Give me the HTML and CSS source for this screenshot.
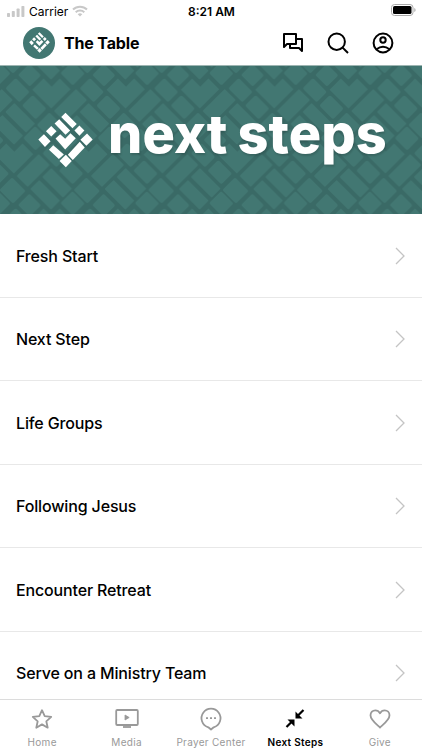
FILE: index.html
```html
<!DOCTYPE html>
<html lang="en">
<head>
  <meta charset="UTF-8" />
  <meta name="viewport" content="width=device-width, initial-scale=1" />
  <title>The Table</title>
  <link rel="stylesheet" href="styles.css">
</head>
<body>
  <svg width="0" height="0" class="defs">
    <symbol id="logo" viewBox="22 21 166 167">
      <path d="M105 22l34 34-13 13-34-34zM86 42l33 34-14 13-33-34zM62 62l16 16-16 16-16-16zM147 61l15 15-15 16-15-16zM40 87l20 21-17 18-20-23zM170 85l17 18-19 19-18-18zM75 100l14-13 15 14 16-17 16 15-32 34zM68 120l32 28-15 14-30-28zM148 110l15 17-36 38-15-16zM106 149l18 19-18 19-19-19z"/>
    </symbol>
  </svg>

  <div class="app">
    <div class="status">
      <div class="carrier">
        <svg width="18" height="11" viewBox="0 0 18 11" fill="#c8c8c8"><rect y="7" width="3" height="4" rx=".7"/><rect x="4.8" y="5" width="3" height="6" rx=".7"/><rect x="9.6" y="2.5" width="3" height="8.5" rx=".7"/><rect x="14.4" width="3" height="11" rx=".7"/></svg>
        <span>Carrier</span>
        <svg width="16" height="12" viewBox="0 0 16 12" fill="none" stroke="#c8c8c8" stroke-width="2"><path d="M1 4.5a10 10 0 0 1 14 0M3.7 7.3a6.2 6.2 0 0 1 8.6 0"/><path d="M8 11.6L5.7 9.3a3.3 3.3 0 0 1 4.6 0z" fill="#c8c8c8" stroke="none"/></svg>
      </div>
      <div class="time">8:21 AM</div>
      <svg class="battery" width="25" height="12" viewBox="0 0 25 12"><rect x=".5" y=".5" width="21.5" height="11" rx="3" fill="#fff" stroke="#aaa"/><rect x="2" y="2" width="18.5" height="8" rx="1.6"/><path d="M23.3 4v4q1.3-.5 1.3-2t-1.3-2" fill="#aaa"/></svg>
    </div>

    <header class="header">
      <div class="avatar"><svg width="21" height="21"><use href="#logo"/></svg></div>
      <h1>The Table</h1>
      <div class="actions">
        <svg width="22" height="22" viewBox="0 0 22 22"><path d="M2 2h12v10H5l-3 3zM14 7h6v12l-3-3H8v-4"/></svg>
        <svg width="22" height="22" viewBox="0 0 22 22"><circle cx="9.7" cy="9.7" r="8.2"/><path d="M15.6 15.6l5.4 5.4"/></svg>
        <svg width="22" height="22" viewBox="0 0 22 22"><circle cx="11" cy="11" r="9.4"/><circle cx="11" cy="8" r="2.7"/><path d="M4.5 17.3q6.5-5.2 13 0"/></svg>
      </div>
    </header>

    <div class="banner">
      <svg class="pattern" width="422" height="148">
        <defs>
          <g id="bricks" transform="rotate(45) scale(.7071)">
            <path d="M8-41H72V75H-41V8H8z"/>
            <rect x="-126" y="90" width="84" height="62" rx="8"/>
            <rect x="-24" y="90" width="82" height="64" rx="8"/>
            <rect x="78" y="92" width="82" height="76" rx="8"/>
            <rect x="-128" y="6" width="70" height="68" rx="8"/>
            <rect x="-6" y="-131" width="74" height="72" rx="8"/>
            <rect x="88" y="-58" width="66" height="132" rx="4"/>
            <rect x="-55" y="169" width="124" height="54" rx="4"/>
            <rect x="-55" y="241" width="124" height="54" rx="4"/>
          </g>
          <g id="row">
            <use href="#bricks" x="-223"/>
            <use href="#bricks"/>
            <use href="#bricks" x="223"/>
            <use href="#bricks" x="446"/>
          </g>
          <pattern id="weave" width="223" height="390" patternUnits="userSpaceOnUse" patternTransform="scale(.3333)">
            <rect width="224" height="391" fill="#3a6a66"/>
            <g fill="#427772">
              <use href="#row" x="43" y="-141"/>
              <use href="#row" x="155" y="54"/>
              <use href="#row" x="43" y="249"/>
              <use href="#row" x="155" y="444"/>
            </g>
          </pattern>
        </defs>
        <rect width="422" height="148" fill="url(#weave)"/>
      </svg>
      <div class="brand">
        <svg width="55" height="56"><use href="#logo"/></svg>
        <div class="title"><span>next</span> <span>steps</span></div>
      </div>
    </div>

    <ul class="list">
      <li>Fresh Start<svg width="10" height="18" viewBox="0 0 10 18"><path d="M1 1l8 8-8 8"/></svg></li>
      <li>Next Step<svg width="10" height="18" viewBox="0 0 10 18"><path d="M1 1l8 8-8 8"/></svg></li>
      <li>Life Groups<svg width="10" height="18" viewBox="0 0 10 18"><path d="M1 1l8 8-8 8"/></svg></li>
      <li>Following Jesus<svg width="10" height="18" viewBox="0 0 10 18"><path d="M1 1l8 8-8 8"/></svg></li>
      <li>Encounter Retreat<svg width="10" height="18" viewBox="0 0 10 18"><path d="M1 1l8 8-8 8"/></svg></li>
      <li>Serve on a Ministry Team<svg width="10" height="18" viewBox="0 0 10 18"><path d="M1 1l8 8-8 8"/></svg></li>
    </ul>

    <nav class="tabs">
      <div class="tab">
        <svg width="24" height="24" viewBox="0 0 24 24"><path d="M12 3.2l2.700 6 6.500.7-4.900 4.400 1.400 6.400-5.700-3.300-5.700 3.300 1.400-6.400-4.900-4.400 6.500-.7z"/></svg>
        <span>Home</span>
      </div>
      <div class="tab">
        <svg width="24" height="24" viewBox="0 0 24 24"><rect x="1.2" y="3" width="21.6" height="15" rx="1"/><path d="M10 8v5l4.200-2.500z" fill="currentColor" stroke-width=".8"/><path d="M8 20h8"/></svg>
        <span>Media</span>
      </div>
      <div class="tab">
        <svg width="24" height="24" viewBox="0 0 24 24"><path d="M9.300 20.300a9.500 9.500 0 1 1 5.400 0L12 22.500z"/><path d="M7 11.200h2M11 11.200h2M15 11.200h2"/></svg>
        <span>Prayer Center</span>
      </div>
      <div class="tab active">
        <svg width="24" height="24" viewBox="0 0 24 24"><path d="M20.500 3L15 8.500M3.500 20L9 14.500"/><path d="M12.500 4.500v7h7zM4.500 12.500h7v7z" fill="currentColor" stroke="none"/></svg>
        <span>Next Steps</span>
      </div>
      <div class="tab">
        <svg width="24" height="24" viewBox="0 0 24 24"><path d="M12 20.500C7 16 2.500 12.800 2.500 8.300 2.500 5.300 4.700 3.300 7.300 3.300c2 0 3.700 1.100 4.700 2.900 1-1.800 2.700-2.900 4.700-2.900 2.600 0 4.800 2 4.800 5 0 4.500-4.500 7.700-9.500 12.200z"/></svg>
        <span>Give</span>
      </div>
    </nav>
  </div>
</body>
</html>
```

FILE: styles.css
```css
* {
  box-sizing: border-box;
}
body {
  margin: 0;
  background: #fff;
  color: #000;
  font-family: Inter, "Liberation Sans", sans-serif;
}
.defs {
  display: none;
}
.app {
  height: 750px;
  display: flex;
  flex-direction: column;
  overflow: hidden;
}
.status {
  height: 22px;
  padding: 0 6px 0 7px;
  display: grid;
  grid-template-columns: 1fr auto 1fr;
  align-items: center;
  font-size: 12px;
}
.carrier {
  display: flex;
  align-items: center;
  gap: 4px;
}
.time {
  font-weight: 600;
}
.battery {
  justify-self: end;
  margin-top: -2px;
}
.header {
  height: 44px;
  padding: 0 28px 2px 23px;
  display: flex;
  align-items: center;
  border-bottom: 1px solid #9db5b2;
}
.avatar {
  width: 32px;
  height: 32px;
  border-radius: 50%;
  background: #427772;
  fill: #fff;
  display: flex;
  align-items: center;
  justify-content: center;
}
h1 {
  margin: 0 0 0 9px;
  font-size: 16px;
  font-weight: 700;
  letter-spacing: -0.15px;
}
.actions {
  margin-left: auto;
  display: flex;
  gap: 23px;
  fill: none;
  stroke: #000;
  stroke-width: 2;
  stroke-linejoin: round;
}
.banner {
  height: 148px;
  flex: none;
  display: grid;
}
.banner > * {
  grid-area: 1 / 1;
}
.brand {
  display: flex;
  align-items: center;
  padding-left: 38px;
  fill: #fff;
}
.title {
  margin: -12px 0 0 15px;
  color: #fff;
  font-size: 54px;
  font-weight: 800;
  line-height: 70px;
  letter-spacing: 0.1px;
  word-spacing: -2px;
  white-space: nowrap;
  text-shadow: 1px 2px 2px rgba(0,0,0,0.15);
}
.list {
  flex: 1;
  min-height: 0;
  overflow: hidden;
  margin: 0;
  padding: 0;
  list-style: none;
}
.list li {
  height: 83.5px;
  padding: 1px 17px 0 16px;
  display: flex;
  align-items: center;
  justify-content: space-between;
  border-bottom: 1px solid #e8e8e8;
  font-size: 16px;
  font-weight: 500;
  letter-spacing: -0.15px;
}
.list svg {
  fill: none;
  stroke: #c4c4c4;
  stroke-width: 1.3;
}
.tabs {
  height: 51px;
  flex: none;
  display: grid;
  grid-template-columns: repeat(5, 1fr);
  border-top: 1px solid #dcdcdc;
  background: #fff;
}
.tab {
  display: flex;
  flex-direction: column;
  align-items: center;
  padding-top: 7px;
  gap: 4px;
  color: #999;
  font-size: 10px;
  line-height: 14px;
  letter-spacing: 0.3px;
  white-space: nowrap;
}
.tab svg {
  fill: none;
  stroke: currentColor;
  stroke-width: 1.8;
  stroke-linejoin: round;
}
.tab.active {
  color: #000;
  font-weight: 600;
}
.tab.active svg {
  stroke-width: 2.2;
}
```
